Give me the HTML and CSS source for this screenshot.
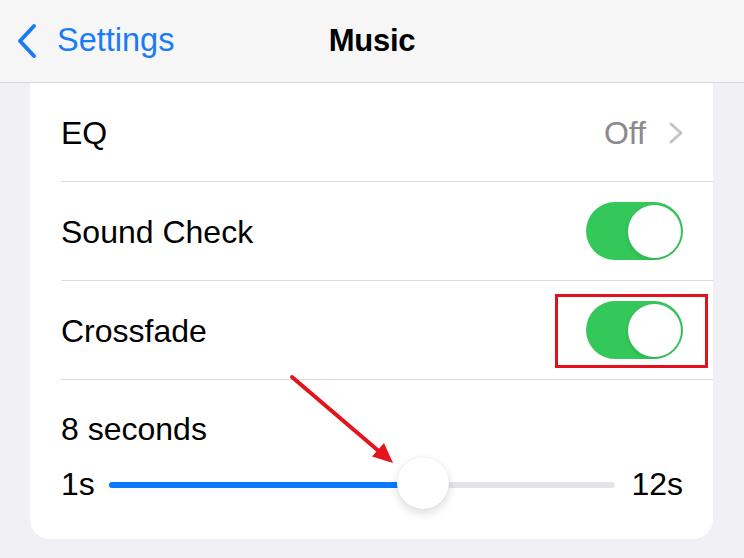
FILE: index.html
```html
<!DOCTYPE html>
<html lang="en">
<head>
<meta charset="utf-8">
<title>Music</title>
<link rel="stylesheet" href="styles.css">
</head>
<body>
<div class="screen">
  <header class="navbar">
    <div class="nav-back">
      <svg class="back-chevron" width="22" height="36" viewBox="0 0 22 36" aria-hidden="true">
        <polyline points="18,3 4,18 18,33" fill="none" stroke="#1a7cf4" stroke-width="4" stroke-linecap="round" stroke-linejoin="round"/>
      </svg>
      <span class="back-label">Settings</span>
    </div>
    <div class="nav-title">Music</div>
    <div class="nav-spacer"></div>
  </header>

  <main class="content">
    <section class="card">
      <div class="row">
        <div class="row-inner">
          <span class="row-label">EQ</span>
          <span class="row-detail">
            <span class="detail-text">Off</span>
            <svg class="disclosure" width="16" height="24" viewBox="0 0 16 24" aria-hidden="true">
              <polyline points="3,3 13,12 3,21" fill="none" stroke="#c4c4c8" stroke-width="3" stroke-linecap="round" stroke-linejoin="round"/>
            </svg>
          </span>
        </div>
      </div>
      <div class="row">
        <div class="row-inner">
          <span class="row-label">Sound Check</span>
          <span class="toggle"><span class="toggle-knob"></span></span>
        </div>
      </div>
      <div class="row">
        <div class="row-inner">
          <span class="row-label">Crossfade</span>
          <span class="toggle highlighted"><span class="toggle-knob"></span><span class="highlight-box"></span></span>
        </div>
      </div>
      <div class="slider-block">
        <div class="slider-caption">8 seconds</div>
        <div class="slider-row">
          <span class="slider-end">1s</span>
          <div class="track">
            <div class="track-fill" style="width: 62%"></div>
            <div class="track-knob" style="left: 62%"></div>
          </div>
          <span class="slider-end">12s</span>
        </div>
      </div>
    </section>
  </main>

  <svg class="annotation-arrow" width="744" height="558" viewBox="0 0 744 558" aria-hidden="true">
    <line x1="292" y1="377" x2="381" y2="453" stroke="#e3141b" stroke-width="4" stroke-linecap="round"/>
    <polygon points="393,463 372,456.5 384,443" fill="#e3141b"/>
  </svg>
</div>
</body>
</html>
```

FILE: styles.css
```css
* {
  box-sizing: border-box;
}

html, body {
  margin: 0;
  padding: 0;
}

body {
  background: #f0f0f5;
  font-family: "Liberation Sans", Arial, sans-serif;
  color: #000;
}

.screen {
  position: relative;
  width: 744px;
  height: 558px;
  overflow: hidden;
  background: #f0f0f5;
}

.navbar {
  height: 83px;
  background: #f6f6f6;
  border-bottom: 1px solid #d6d6d8;
  display: grid;
  grid-template-columns: 1fr auto 1fr;
  align-items: center;
}

.nav-back {
  display: flex;
  align-items: center;
  padding-left: 16px;
  color: #1a7cf4;
  font-size: 32.5px;
  padding-bottom: 1px;
}

.back-chevron {
  display: block;
  margin-right: 19px;
}

.nav-title {
  font-size: 31px;
  font-weight: bold;
  letter-spacing: -0.3px;
  padding-bottom: 1px;
}

.content {
  padding: 0 31px 0 30px;
}

.card {
  background: #fff;
  border-radius: 0 0 20px 20px;
  height: 456px;
}

.row {
  padding-left: 31px;
}

.row-inner {
  height: 99px;
  border-bottom: 1px solid #dcdce0;
  display: flex;
  align-items: center;
  justify-content: space-between;
  padding-right: 30px;
  padding-top: 2px;
}

.row-label {
  font-size: 32px;
}

.row-detail {
  display: flex;
  align-items: center;
}

.detail-text {
  font-size: 32px;
  color: #8a8a8e;
  margin-right: 22px;
}

.disclosure {
  display: block;
  margin-right: -1px;
}

.toggle {
  position: relative;
  width: 97px;
  height: 58px;
  border-radius: 29px;
  background: #34c759;
  display: block;
  margin-top: -2px;
}

.toggle-knob {
  position: absolute;
  right: 2.5px;
  top: 2.5px;
  width: 53px;
  height: 53px;
  border-radius: 50%;
  background: #fff;
  box-shadow: 0 2px 4px rgba(0, 0, 0, 0.12);
}

.highlight-box {
  position: absolute;
  left: -31px;
  top: -7px;
  width: 153px;
  height: 74px;
  border: 3.5px solid #e3121a;
}

.slider-block {
  padding: 31px 30px 0 31px;
}

.slider-caption {
  font-size: 32px;
  line-height: 36px;
}

.slider-row {
  margin-top: 10px;
  height: 52px;
  display: flex;
  align-items: center;
}

.slider-end {
  font-size: 32px;
  padding-top: 2px;
}

.track {
  position: relative;
  flex: 1;
  height: 6px;
  margin: 4px 16px 0 14px;
  border-radius: 3px;
  background: #e3e3e8;
}

.track-fill {
  height: 100%;
  border-radius: 3px;
  background: #0a7aff;
}

.track-knob {
  position: absolute;
  top: 50%;
  width: 52px;
  height: 52px;
  margin: -28px 0 0 -26px;
  border-radius: 50%;
  background: #fff;
  box-shadow: 0 4px 10px rgba(0, 0, 0, 0.14), 0 0 1px rgba(0, 0, 0, 0.12);
}

.annotation-arrow {
  position: absolute;
  left: 0;
  top: 0;
  pointer-events: none;
}
```
